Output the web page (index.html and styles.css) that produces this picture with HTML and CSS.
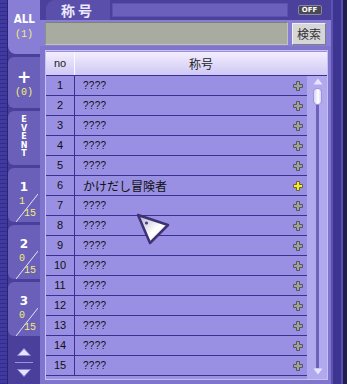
FILE: index.html
```html
<!DOCTYPE html>
<html>
<head>
<meta charset="utf-8">
<link rel="stylesheet" href="styles.css">
</head>
<body>
<div class="app">
  <div class="strip"></div>
  <nav class="sidebar">
    <div class="tab tab-all"><span class="tab-label">ALL</span><span class="tab-count">(1)</span></div>
    <div class="tab tab-plus"><span class="plus-sign">+</span><span class="tab-count">(0)</span></div>
    <div class="tab tab-event"><span>E</span><span>V</span><span>E</span><span>N</span><span>T</span></div>
    <div class="tab tab-page"><span class="page-num">1</span><span class="frac"><span class="num">1</span><span class="den">15</span></span></div>
    <div class="tab tab-page"><span class="page-num">2</span><span class="frac"><span class="num">0</span><span class="den">15</span></span></div>
    <div class="tab tab-page"><span class="page-num">3</span><span class="frac"><span class="num">0</span><span class="den">15</span></span></div>
    <div class="arrows">
      <svg class="arrow" width="14" height="8" viewBox="0 0 14 8"><polygon points="7,0.5 13.5,7.5 0.5,7.5" fill="#e6e2ff" stroke="#9088d0" stroke-width="1"/></svg>
      <div class="sep"></div>
      <svg class="arrow" width="14" height="8" viewBox="0 0 14 8"><polygon points="0.5,0.5 13.5,0.5 7,7.5" fill="#e6e2ff" stroke="#9088d0" stroke-width="1"/></svg>
    </div>
  </nav>
  <main class="panel">
    <div class="topbar">
      <div class="title">称号</div>
      <div class="bar"></div>
      <div class="off-wrap"><span class="off">OFF</span></div>
    </div>
    <div class="search">
      <div class="input"></div>
      <div class="btn">検索</div>
    </div>
    <div class="frame">
      <div class="thead"><div class="th th-no">no</div><div class="th th-name">称号</div></div>
      <div class="tbody">
        <div class="rows">
          <div class="row"><div class="no">1</div><div class="name"><span>????</span><svg class="plus" width="10" height="10" viewBox="0 0 10 10"><polygon points="3.5,0.5 6.5,0.5 6.5,3.5 9.5,3.5 9.5,6.5 6.5,6.5 6.5,9.5 3.5,9.5 3.5,6.5 0.5,6.5 0.5,3.5 3.5,3.5" fill="#a4a290" stroke="#55546a"/></svg></div></div>
          <div class="row"><div class="no">2</div><div class="name"><span>????</span><svg class="plus" width="10" height="10" viewBox="0 0 10 10"><polygon points="3.5,0.5 6.5,0.5 6.5,3.5 9.5,3.5 9.5,6.5 6.5,6.5 6.5,9.5 3.5,9.5 3.5,6.5 0.5,6.5 0.5,3.5 3.5,3.5" fill="#a4a290" stroke="#55546a"/></svg></div></div>
          <div class="row"><div class="no">3</div><div class="name"><span>????</span><svg class="plus" width="10" height="10" viewBox="0 0 10 10"><polygon points="3.5,0.5 6.5,0.5 6.5,3.5 9.5,3.5 9.5,6.5 6.5,6.5 6.5,9.5 3.5,9.5 3.5,6.5 0.5,6.5 0.5,3.5 3.5,3.5" fill="#a4a290" stroke="#55546a"/></svg></div></div>
          <div class="row"><div class="no">4</div><div class="name"><span>????</span><svg class="plus" width="10" height="10" viewBox="0 0 10 10"><polygon points="3.5,0.5 6.5,0.5 6.5,3.5 9.5,3.5 9.5,6.5 6.5,6.5 6.5,9.5 3.5,9.5 3.5,6.5 0.5,6.5 0.5,3.5 3.5,3.5" fill="#a4a290" stroke="#55546a"/></svg></div></div>
          <div class="row"><div class="no">5</div><div class="name"><span>????</span><svg class="plus" width="10" height="10" viewBox="0 0 10 10"><polygon points="3.5,0.5 6.5,0.5 6.5,3.5 9.5,3.5 9.5,6.5 6.5,6.5 6.5,9.5 3.5,9.5 3.5,6.5 0.5,6.5 0.5,3.5 3.5,3.5" fill="#a4a290" stroke="#55546a"/></svg></div></div>
          <div class="row"><div class="no">6</div><div class="name"><span class="jp">かけだし冒険者</span><svg class="plus" width="10" height="10" viewBox="0 0 10 10"><polygon points="3.5,0.5 6.5,0.5 6.5,3.5 9.5,3.5 9.5,6.5 6.5,6.5 6.5,9.5 3.5,9.5 3.5,6.5 0.5,6.5 0.5,3.5 3.5,3.5" fill="#f4ee1c" stroke="#6a6048"/></svg></div></div>
          <div class="row"><div class="no">7</div><div class="name"><span>????</span><svg class="plus" width="10" height="10" viewBox="0 0 10 10"><polygon points="3.5,0.5 6.5,0.5 6.5,3.5 9.5,3.5 9.5,6.5 6.5,6.5 6.5,9.5 3.5,9.5 3.5,6.5 0.5,6.5 0.5,3.5 3.5,3.5" fill="#a4a290" stroke="#55546a"/></svg></div></div>
          <div class="row"><div class="no">8</div><div class="name"><span>????</span><svg class="plus" width="10" height="10" viewBox="0 0 10 10"><polygon points="3.5,0.5 6.5,0.5 6.5,3.5 9.5,3.5 9.5,6.5 6.5,6.5 6.5,9.5 3.5,9.5 3.5,6.5 0.5,6.5 0.5,3.5 3.5,3.5" fill="#a4a290" stroke="#55546a"/></svg></div></div>
          <div class="row"><div class="no">9</div><div class="name"><span>????</span><svg class="plus" width="10" height="10" viewBox="0 0 10 10"><polygon points="3.5,0.5 6.5,0.5 6.5,3.5 9.5,3.5 9.5,6.5 6.5,6.5 6.5,9.5 3.5,9.5 3.5,6.5 0.5,6.5 0.5,3.5 3.5,3.5" fill="#a4a290" stroke="#55546a"/></svg></div></div>
          <div class="row"><div class="no">10</div><div class="name"><span>????</span><svg class="plus" width="10" height="10" viewBox="0 0 10 10"><polygon points="3.5,0.5 6.5,0.5 6.5,3.5 9.5,3.5 9.5,6.5 6.5,6.5 6.5,9.5 3.5,9.5 3.5,6.5 0.5,6.5 0.5,3.5 3.5,3.5" fill="#a4a290" stroke="#55546a"/></svg></div></div>
          <div class="row"><div class="no">11</div><div class="name"><span>????</span><svg class="plus" width="10" height="10" viewBox="0 0 10 10"><polygon points="3.5,0.5 6.5,0.5 6.5,3.5 9.5,3.5 9.5,6.5 6.5,6.5 6.5,9.5 3.5,9.5 3.5,6.5 0.5,6.5 0.5,3.5 3.5,3.5" fill="#a4a290" stroke="#55546a"/></svg></div></div>
          <div class="row"><div class="no">12</div><div class="name"><span>????</span><svg class="plus" width="10" height="10" viewBox="0 0 10 10"><polygon points="3.5,0.5 6.5,0.5 6.5,3.5 9.5,3.5 9.5,6.5 6.5,6.5 6.5,9.5 3.5,9.5 3.5,6.5 0.5,6.5 0.5,3.5 3.5,3.5" fill="#a4a290" stroke="#55546a"/></svg></div></div>
          <div class="row"><div class="no">13</div><div class="name"><span>????</span><svg class="plus" width="10" height="10" viewBox="0 0 10 10"><polygon points="3.5,0.5 6.5,0.5 6.5,3.5 9.5,3.5 9.5,6.5 6.5,6.5 6.5,9.5 3.5,9.5 3.5,6.5 0.5,6.5 0.5,3.5 3.5,3.5" fill="#a4a290" stroke="#55546a"/></svg></div></div>
          <div class="row"><div class="no">14</div><div class="name"><span>????</span><svg class="plus" width="10" height="10" viewBox="0 0 10 10"><polygon points="3.5,0.5 6.5,0.5 6.5,3.5 9.5,3.5 9.5,6.5 6.5,6.5 6.5,9.5 3.5,9.5 3.5,6.5 0.5,6.5 0.5,3.5 3.5,3.5" fill="#a4a290" stroke="#55546a"/></svg></div></div>
          <div class="row"><div class="no">15</div><div class="name"><span>????</span><svg class="plus" width="10" height="10" viewBox="0 0 10 10"><polygon points="3.5,0.5 6.5,0.5 6.5,3.5 9.5,3.5 9.5,6.5 6.5,6.5 6.5,9.5 3.5,9.5 3.5,6.5 0.5,6.5 0.5,3.5 3.5,3.5" fill="#a4a290" stroke="#55546a"/></svg></div></div>
        </div>
        <div class="scroll">
          <svg class="sc-arrow" width="10" height="7" viewBox="0 0 10 7"><polygon points="5,0.5 9.5,6.5 0.5,6.5" fill="#e8e4ff"/></svg>
          <div class="thumb"></div>
          <div class="track"></div>
          <svg class="sc-arrow" width="10" height="7" viewBox="0 0 10 7"><polygon points="0.5,0.5 9.5,0.5 5,6.5" fill="#e8e4ff"/></svg>
        </div>
      </div>
    </div>
  </main>
  <div class="edge"></div>
</div>
<svg class="cursor" width="40" height="38" viewBox="0 0 40 38">
  <defs>
    <linearGradient id="cg" x1="0" y1="0" x2="1" y2="1">
      <stop offset="0" stop-color="#b0acc6"/>
      <stop offset="0.55" stop-color="#ffffff"/>
      <stop offset="1" stop-color="#e8e6f2"/>
    </linearGradient>
  </defs>
  <polygon points="4,5 34,15 16,33" fill="url(#cg)" stroke="#3e3174" stroke-width="2.5" stroke-linejoin="round"/>
  <circle cx="12.5" cy="13" r="1.6" fill="#4a3f86"/>
</svg>
</body>
</html>
```

FILE: styles.css
```css
* {
  box-sizing: border-box;
  margin: 0;
  padding: 0;
}

html, body {
  width: 347px;
  height: 384px;
  overflow: hidden;
}

body {
  background: #1f1d48;
  font-family: "Liberation Sans", "Noto Sans CJK JP", sans-serif;
  position: relative;
}

.app {
  display: flex;
  height: 384px;
}

.strip {
  width: 8px;
  background: repeating-linear-gradient(to bottom, #4039a0 0 3px, #332c86 3px 4px);
  border-right: 1px solid #2b2476;
}

.sidebar {
  width: 32px;
  background: #4a409c;
  display: flex;
  flex-direction: column;
  gap: 3px;
}

.tab {
  background: #6a60b9;
  border-radius: 6px 0 0 6px;
  display: flex;
  flex-direction: column;
  align-items: center;
  color: #fff;
  font-weight: bold;
}

.tab-all {
  height: 54px;
  background: #887ed6;
  border-radius: 0 0 0 8px;
  padding-top: 12px;
}

.tab-label {
  font-size: 13px;
  line-height: 14px;
  font-family: "DejaVu Sans", sans-serif;
  transform: scaleX(0.8);
}

.tab-count {
  margin-top: 4px;
  font-size: 10px;
  line-height: 10px;
  color: #f2ee70;
  font-weight: normal;
  font-family: "Liberation Mono", monospace;
}

.tab-plus {
  height: 51px;
  padding-top: 12px;
}

.plus-sign {
  font-size: 17px;
  line-height: 16px;
  font-family: "DejaVu Sans", sans-serif;
}

.tab-plus .tab-count {
  margin-top: 3px;
}

.tab-event {
  height: 54px;
  padding-top: 5px;
  font-size: 8px;
  line-height: 8.6px;
  font-family: "DejaVu Sans", sans-serif;
}

.tab-page {
  height: 54px;
  padding-top: 13px;
}

.tab-page:last-of-type {
  height: 53px;
}

.page-num {
  font-size: 12px;
  line-height: 12px;
  font-family: "DejaVu Sans", sans-serif;
}

.frac {
  margin: 1px 0 0 6px;
  width: 22px;
  height: 28px;
  display: flex;
  flex-direction: column;
  justify-content: space-between;
  padding: 3px 0 3px;
  color: #f2ee70;
  font-weight: normal;
  font-size: 10px;
  line-height: 10px;
  font-family: "Liberation Mono", monospace;
  background: linear-gradient(to bottom right, transparent calc(50% - 0.8px), #e4e0ff 50%, transparent calc(50% + 0.8px));
}

.num {
  align-self: flex-start;
  padding-left: 3px;
}

.den {
  align-self: flex-end;
  padding-right: 2px;
}

.arrows {
  flex: 1;
  display: flex;
  flex-direction: column;
  align-items: center;
  padding-top: 9px;
  background: #4a409c;
}

.sep {
  width: 18px;
  height: 1px;
  background: #9a92e0;
  margin: 6px 0 6px;
}

.panel {
  width: 293px;
  background: #7f75cd;
  display: flex;
  flex-direction: column;
  border-right: 2px solid #5c52b2;
}

.topbar {
  height: 20px;
  display: flex;
  align-items: center;
  background: #4b419d;
  padding-left: 6px;
}

.title {
  width: 64px;
  height: 20px;
  background: #5a50ac;
  border-radius: 9px 0 0 0;
  color: #ece8ff;
  font-family: "Noto Sans CJK JP", sans-serif;
  font-weight: bold;
  font-size: 14px;
  line-height: 20px;
  letter-spacing: 3px;
  text-align: center;
}

.bar {
  margin-left: 2px;
  width: 176px;
  height: 14px;
  background: #6b61bd;
  border: 1px solid #5b51ae;
}

.off-wrap {
  flex: 1;
  display: flex;
  justify-content: center;
}

.off {
  display: block;
  width: 24px;
  height: 10px;
  background: #4a4852;
  border: 1px solid #8a88a0;
  border-radius: 2px;
  color: #fff;
  font-family: "DejaVu Sans", sans-serif;
  font-weight: bold;
  font-size: 7px;
  line-height: 8px;
  text-align: center;
}

.search {
  height: 26px;
  display: flex;
  gap: 4px;
  padding: 2px 0 0 5px;
  background: #887ed6;
}

.input {
  width: 243px;
  height: 23px;
  background: #a8ab9f;
  border: 1px solid #8c8f85;
  border-top-color: #7e8178;
  border-right-color: #c0c4b6;
  border-bottom-color: #c0c4b6;
}

.btn {
  width: 34px;
  height: 22px;
  margin-top: 1px;
  background: #d6d6d8;
  border: 1px solid #7c7c84;
  border-top-color: #f0f0f0;
  border-left-color: #f0f0f0;
  color: #333;
  font-family: "Noto Sans CJK JP", sans-serif;
  font-size: 12px;
  line-height: 20px;
  text-align: center;
}

.frame {
  margin: 4px 0 0 5px;
  width: 283px;
  height: 330px;
  border: 1px solid #c8c0f2;
  background: #9a90e2;
  display: flex;
  flex-direction: column;
  padding-top: 1px;
}

.thead {
  display: grid;
  grid-template-columns: 29px 1fr;
  height: 24px;
  border-bottom: 1px solid #3b3192;
  background: linear-gradient(#f2eeff, #d0c8f4);
}

.th {
  font-size: 11px;
  line-height: 23px;
  text-align: center;
  color: #222;
}

.th-no {
  border-right: 1px solid #fbfaff;
}

.th-name {
  font-family: "Noto Sans CJK JP", sans-serif;
  font-size: 12px;
}

.tbody {
  display: flex;
  flex: 1;
}

.rows {
  flex: 1;
  display: flex;
  flex-direction: column;
}

.row {
  height: 20px;
  display: grid;
  grid-template-columns: 29px 1fr;
  border-bottom: 1px solid #3b3192;
  background: #9a90e3;
}

.no {
  border-right: 1px solid #3b3192;
  text-align: center;
  font-size: 11px;
  line-height: 19px;
  color: #111;
}

.name {
  display: flex;
  align-items: center;
  justify-content: space-between;
  padding: 0 4px 0 8px;
  font-size: 10px;
  color: #111;
  letter-spacing: 0.3px;
}

.jp {
  font-family: "Noto Sans CJK JP", sans-serif;
  font-size: 12px;
  letter-spacing: 0;
}

.plus {
  display: block;
}

.scroll {
  width: 20px;
  background: #b1a9ee;
  display: flex;
  flex-direction: column;
  align-items: center;
  padding: 2px 0 4px 1px;
}

.thumb {
  width: 9px;
  height: 17px;
  margin-top: 3px;
  border-radius: 4px;
  background: linear-gradient(to right, #d8d4f6, #ffffff 60%, #d8d4f6);
  border: 1px solid #9e96dc;
}

.track {
  flex: 1;
  width: 3px;
  background: #6c62b6;
}

.edge {
  flex: 1;
  background: linear-gradient(to right, #3d3590 0 8px, #5850ae 8px 10px, #221f4a 10px);
}

.cursor {
  position: absolute;
  left: 134px;
  top: 210px;
}
```
